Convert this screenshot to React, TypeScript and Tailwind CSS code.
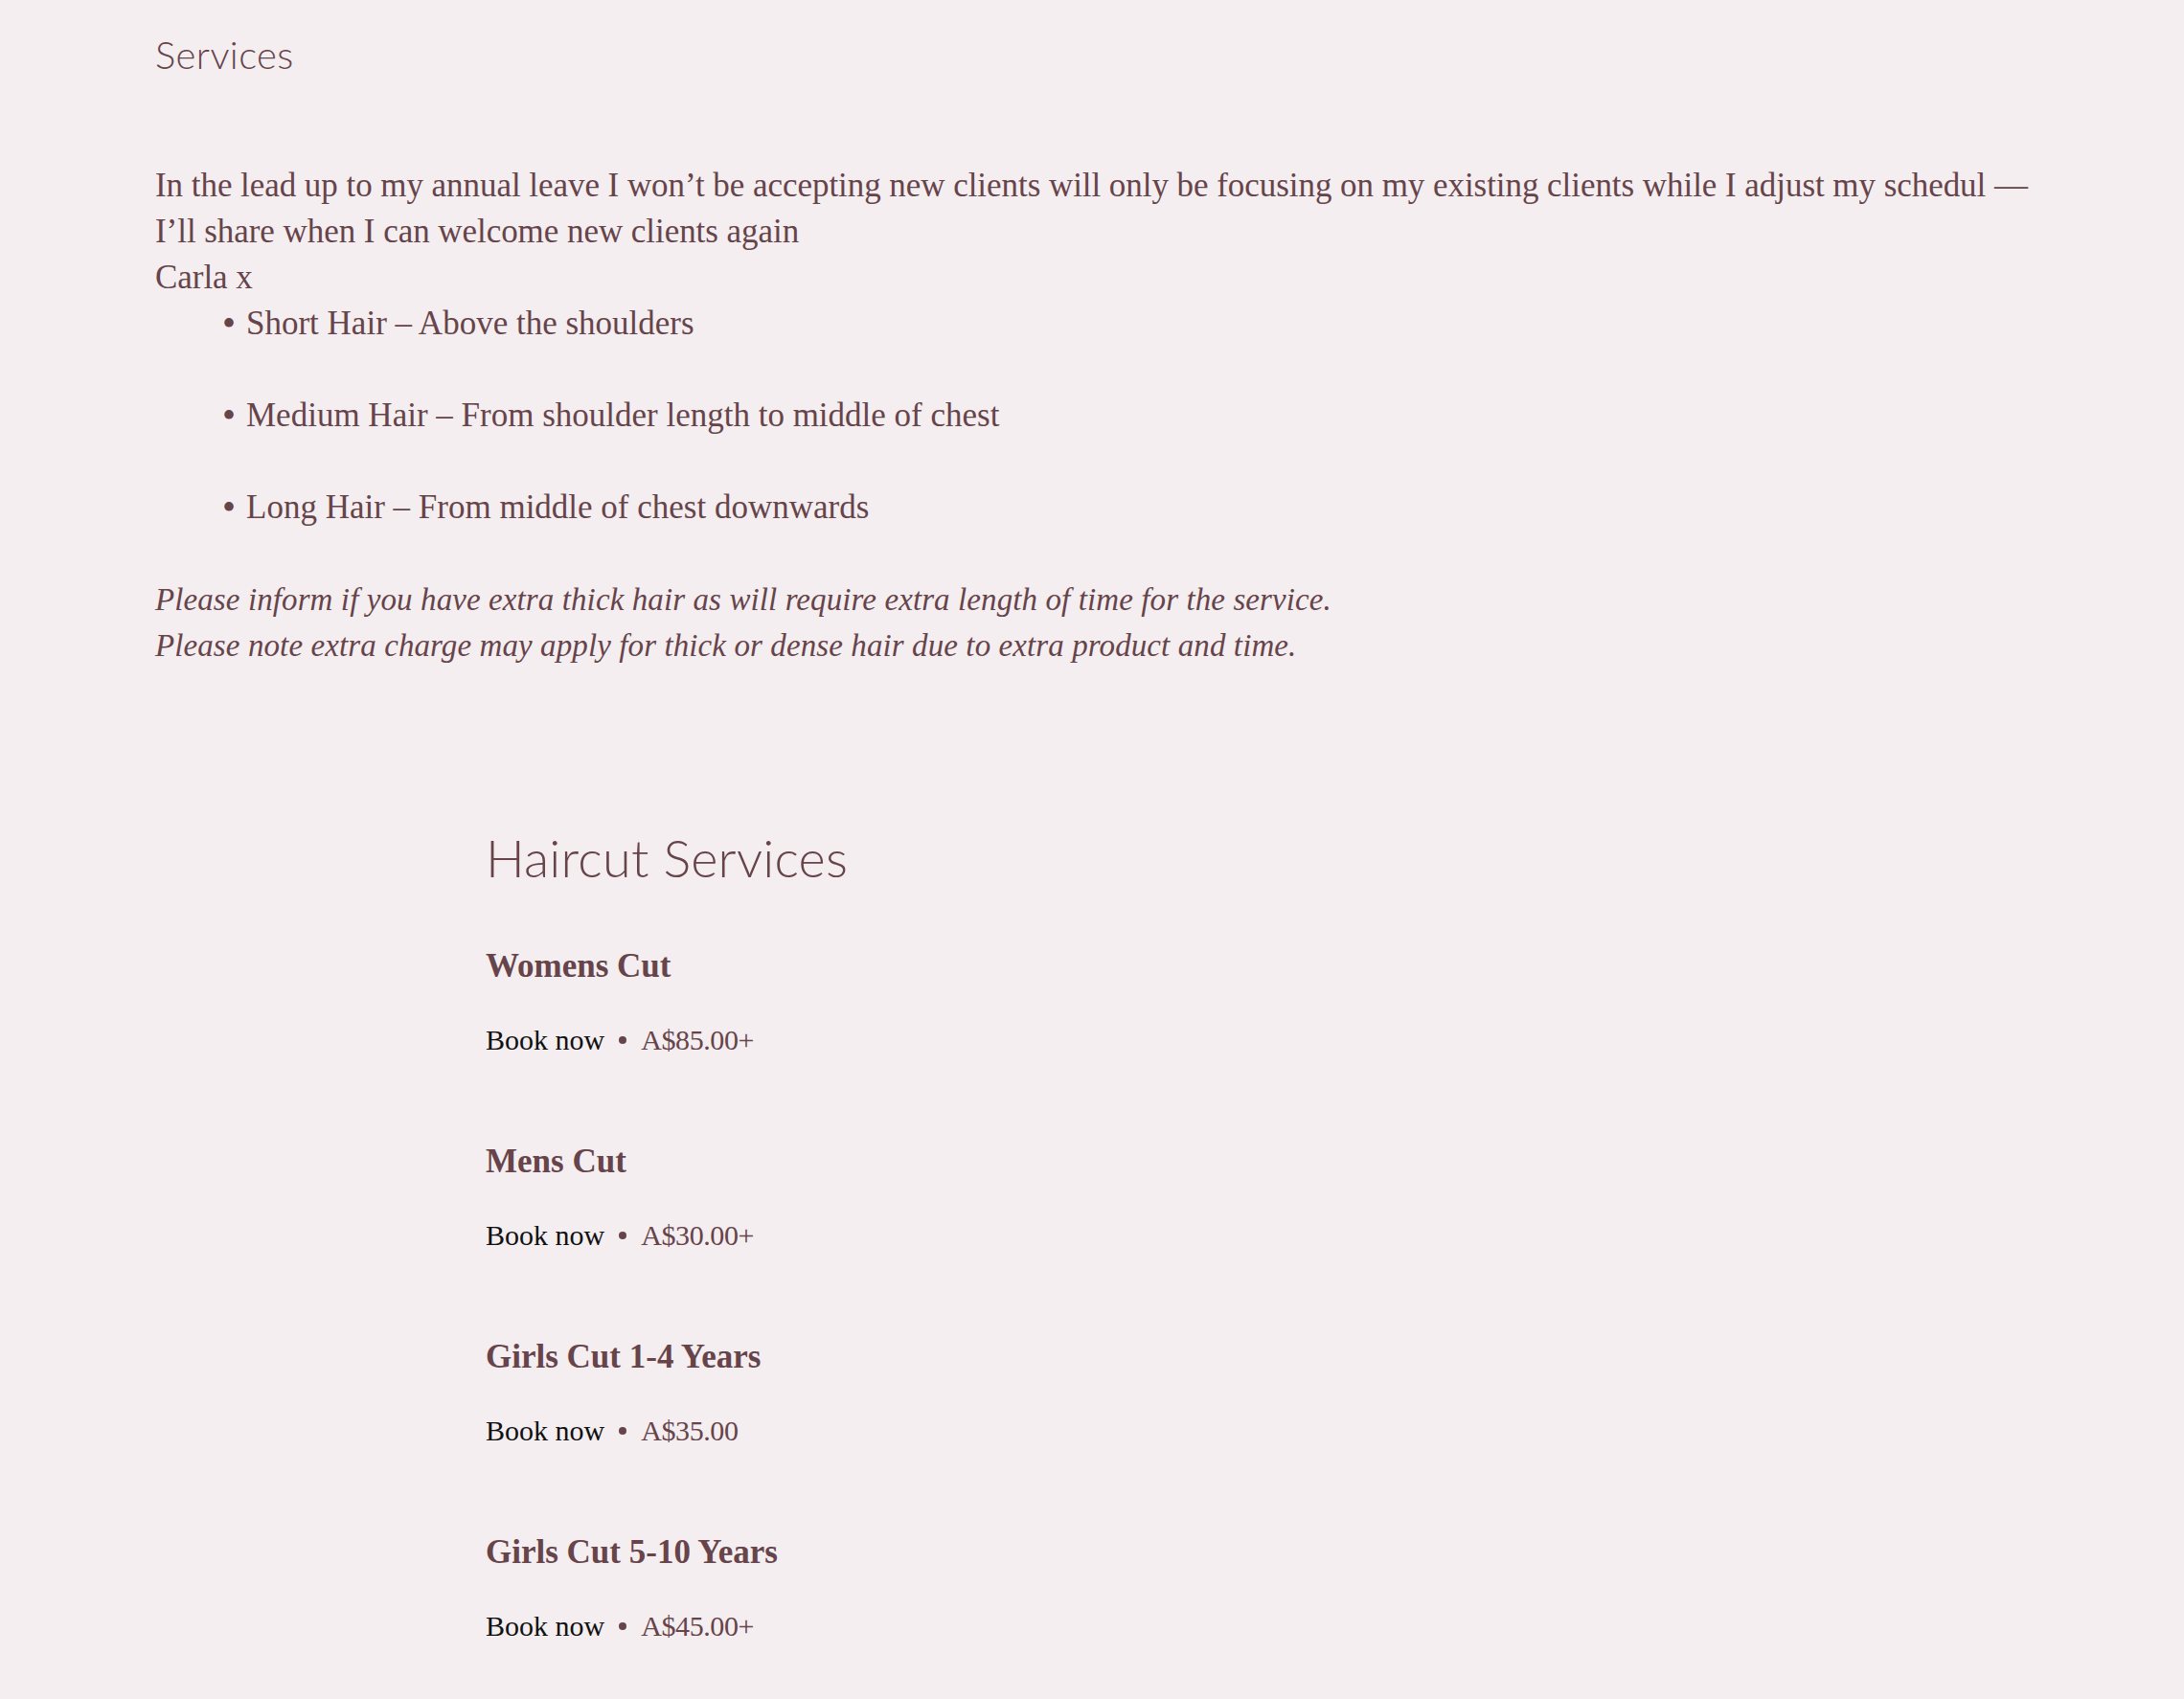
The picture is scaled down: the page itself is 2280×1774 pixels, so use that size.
import React from "react";

const serif = { fontFamily: '"Liberation Serif", "DejaVu Serif", serif' };
const head = { fontFamily: 'Lato, "Open Sans", sans-serif' };

const items = [
  { name: "Womens Cut", price: "A$85.00+" },
  { name: "Mens Cut", price: "A$30.00+" },
  { name: "Girls Cut 1-4 Years", price: "A$35.00" },
  { name: "Girls Cut 5-10 Years", price: "A$45.00+" },
];

export default function App() {
  return (
    <div className="min-h-[1774px] w-full bg-[#f4eef0] text-[#66444a]" style={serif}>
      <div className="px-[162px] pt-[33px]">
        <h1 className="text-[40px] leading-[48px] font-light tracking-[0.4px]" style={head}>
          Services
        </h1>
        <div className="mt-[89px] text-[35px] leading-[48px]">
          <p className="whitespace-nowrap tracking-[-0.05px]">
            In the lead up to my annual leave I won’t be accepting new clients will only be focusing on my existing clients while I adjust my schedul —
            <br />
            I’ll share when I can welcome new clients again
            <br />
            Carla x
          </p>
          <ul className="pl-[70px]">
            {[
              "Short Hair – Above the shoulders",
              "Medium Hair – From shoulder length to middle of chest",
              "Long Hair – From middle of chest downwards",
            ].map((t) => (
              <li key={t} className="mb-[48px] flex items-center">
                <span className="w-[25px] shrink-0 text-[40px] leading-[48px]">•</span>
                <span>{t}</span>
              </li>
            ))}
          </ul>
          <p className="italic text-[33px] whitespace-nowrap tracking-[0.1px]">
            Please inform if you have extra thick hair as will require extra length of time for the service.
            <br />
            Please note extra charge may apply for thick or dense hair due to extra product and time.
          </p>
        </div>
        <div className="ml-[345px]">
          <h2 className="mt-[166px] text-[54px] leading-[64px] font-light tracking-[0.2px]" style={head}>
            Haircut Services
          </h2>
          {items.map((it, i) => (
            <div key={it.name} className={i === 0 ? "mt-[57px]" : "mt-[83px]"}>
              <h3 className="text-[35px] leading-[48px] font-bold">{it.name}</h3>
              <div className="mt-[33px] flex items-center text-[30px] leading-[40px]">
                <span className="text-[#111]">Book now</span>
                <span className="mx-[15px] h-[8px] w-[8px] rounded-full bg-[#66444a]" />
                <span className="tracking-[-0.4px]">{it.price}</span>
              </div>
            </div>
          ))}
        </div>
      </div>
    </div>
  );
}
